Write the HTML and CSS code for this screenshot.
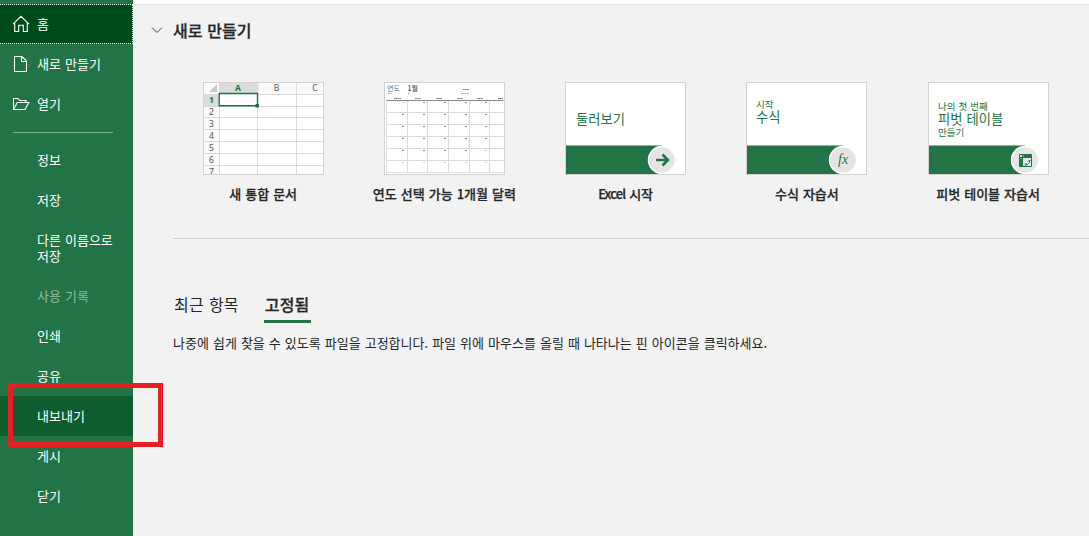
FILE: index.html
```html
<!DOCTYPE html>
<html lang="ko">
<head>
<meta charset="utf-8">
<title>Excel</title>
<link rel="stylesheet" href="styles.css">
</head>
<body>
<div class="app">
  <nav class="sidebar">
    <a class="item item-home"><svg class="icon" viewBox="0 0 18 18"><path d="M1 9.200 9 1.300l8 7.900M2.700 7.800v8.700h4V10.300h4.600v6.200h4V7.800"/></svg>홈</a>
    <a class="item"><svg class="icon" viewBox="0 0 18 18"><path d="M2.500 1.500h7.500l4.500 4.500v10.500h-12zM9.500 1.500v5h5"/></svg>새로 만들기</a>
    <a class="item"><svg class="icon" viewBox="0 0 18 18"><path d="M1.500 14.500v-11h4.500l1.500 2h6.500v2M1.500 14.500l3.800-7h11.500l-3.800 7z"/></svg>열기</a>
    <hr class="divider">
    <a class="item">정보</a>
    <a class="item">저장</a>
    <a class="item item-tall">다른 이름으로<br>저장</a>
    <a class="item item-disabled">사용 기록</a>
    <a class="item">인쇄</a>
    <a class="item">공유</a>
    <a class="item item-active">내보내기</a>
    <a class="item">게시</a>
    <a class="item">닫기</a>
  </nav>
  <main class="main">
    <h1 class="heading"><svg class="chevron" viewBox="0 0 12 8"><path d="M1 1.500 6 6.500l5-5"/></svg>새로 만들기</h1>
    <section class="templates">
      <figure class="card">
        <svg class="thumb" viewBox="0 0 119 91">
          <path class="head" d="M0 0h120v11H0zM0 11h15v81H0z" />
          <path class="head-on" d="M15.500 0h39v11h-39zM0 11h15v12.500H0z"/>
          <path class="corner" d="M5 9h8V1z"/>
          <path class="grid" d="M15.500 0v92M53.500 0v92M92.500 0v92M0 11.500h120M0 23.500h120M0 34.500h120M0 46.500h120M0 58.500h120M0 70.500h120M0 82.500h120"/>
          <path class="cell" d="M15.200 10.500h38.300v12.200h-38.300z"/>
          <path class="handle" d="M51.500 21H55v3.500h-3.500z"/>
          <g class="labels">
            <text class="on" x="34" y="8">A</text><text x="72.500" y="8">B</text><text x="111" y="8">C</text>
            <text class="on" x="7.500" y="20">1</text><text x="7.500" y="32.300">2</text><text x="7.500" y="44">3</text><text x="7.500" y="56">4</text><text x="7.500" y="68">5</text><text x="7.500" y="80">6</text><text x="7.500" y="92">7</text>
          </g>
        </svg>
        <figcaption>새 통합 문서</figcaption>
      </figure>
      <figure class="card">
        <svg class="thumb" viewBox="0 0 119 91">
          <text class="cal-year" x="2" y="7.500">연도</text><text class="cal-month" x="22.500" y="7.800">1월</text>
          <path class="cal-tick" d="M3 10.500h4M23 10.500h2M76 10.500h8"/>
          <path class="cal-note" d="M78 6.500h6"/>
          <path class="cal-days" d="M9 15.500h7M30 15.500h6M51 15.500h6M72 15.500h6M92 15.500h6M113 15.500h5"/>
          <path class="cal-rule" d="M1.500 17.500h117"/>
          <path class="grid" d="M1.500 18v72M22.500 18v72M42.500 18v72M63.500 18v72M84.500 18v72M104.500 18v72M1 29.500h118M1 41.500h118M1 53.500h118M1 65.500h118M1 77.500h118M1 89.500h118"/>
          <path class="cal-num" d="M38 19.500h2M59 19.500h2M80 19.500h2M100 19.500h2M17 31.500h2M38 31.500h2M59 31.500h2M80 31.500h2M100 31.500h2M17 43.500h2M38 43.500h2M59 43.500h2M80 43.500h2M100 43.500h2M17 55.500h2M38 55.500h2M59 55.500h2M80 55.500h2M100 55.500h2M17 67.500h2M38 67.500h2M59 67.500h2M80 67.500h2"/>
          <path class="cal-faint" d="M17 19.500h2M100 67.500h2M17 79.500h2M38 79.500h2M59 79.500h2M80 79.500h2M100 79.500h2"/>
        </svg>
        <figcaption>연도 선택 가능 1개월 달력</figcaption>
      </figure>
      <figure class="card">
        <svg class="thumb" viewBox="0 0 119 91">
          <text class="t-large" x="10" y="40.500">둘러보기</text>
          <path class="band" d="M0 62.500h96v29H0z"/><circle class="badge" cx="96" cy="77" r="13.500"/>
          <path class="arrow" d="M90 77h11M96.500 71.500l5.500 5.500-5.500 5.500"/>
        </svg>
        <figcaption><span class="latin">Excel</span> 시작</figcaption>
      </figure>
      <figure class="card">
        <svg class="thumb" viewBox="0 0 119 91">
          <text class="t-small" x="9" y="24.500">시작</text><text class="t-large" x="9" y="38.500">수식</text>
          <path class="band" d="M0 62.500h96v29H0z"/><circle class="badge" cx="96" cy="77" r="13.500"/>
          <text class="fx" x="91" y="81">fx</text>
        </svg>
        <figcaption>수식 자습서</figcaption>
      </figure>
      <figure class="card">
        <svg class="thumb" viewBox="0 0 119 91">
          <text class="t-small" x="9" y="27">나의 첫 번째</text><text class="t-large" x="9" y="41">피벗 테이블</text><text class="t-small" x="9" y="52.500">만들기</text>
          <path class="band" d="M0 62.500h96v29H0z"/><circle class="badge" cx="96" cy="77" r="13.500"/>
          <path class="pivot" d="M90.500 71.500h12v12h-12zM90.500 74.500h12M93.500 71.500v12"/>
          <path class="pivot-head" d="M94.500 71.500h8v2.500h-8zM90.500 75.500h2.500v8h-2.500z"/>
          <path class="pivot-arrow" d="M96.500 81.500h2l2-2v-2M97.500 80l-1.500 1.500 1.500 1.500M99 78.500l1.500-1.500 1.500 1.500"/>
        </svg>
        <figcaption>피벗 테이블 자습서</figcaption>
      </figure>
    </section>
    <div class="tabs"><span class="tab">최근 항목</span><span class="tab tab-on">고정됨</span></div>
    <p class="hint">나중에 쉽게 찾을 수 있도록 파일을 고정합니다. 파일 위에 마우스를 올릴 때 나타나는 핀 아이콘을 클릭하세요.</p>
  </main>
  <div class="callout"></div>
</div>
</body>
</html>
```
FILE: styles.css
```css
* { box-sizing: border-box; }
body {
  margin: 0;
  font: 13px/16px "Noto Sans CJK KR", sans-serif;
  word-spacing: .4px;
  color: #262626;
}
.app { position: relative; display: flex; width: 1089px; height: 536px; overflow: hidden; }
.sidebar { width: 133px; flex: none; padding-top: 4px; background: #227447; color: #fff; }
.item { display: flex; align-items: center; height: 40px; padding-left: 37px; }
.item-home { background: #004b1c; border: 1px dotted #fff; border-left: 0; }
.item-tall { height: 56px; }
.item-disabled { color: #90b9a2; }
.item-active { background: #0f5c2f; }
.icon { width: 18px; height: 18px; margin: 0 7px 0 -25px; flex: none; fill: none; stroke: #fff; stroke-width: 1.1; }
.divider { height: 1px; margin: 8px 20px 7px 13px; border: 0; background: #7fb296; }
.main { flex: 1; min-width: 0; padding-left: 40px; background: #f2f2f2; border-top: 4px solid #fff; box-shadow: inset 0 1px #e1e1e1; }
.heading { display: flex; align-items: center; height: 24px; margin: 14px 0 0 -22px; font-size: 16px; font-weight: 500; }
.heading { -webkit-text-stroke: .3px #262626; }
.chevron { width: 12px; height: 8px; margin-right: 10px; fill: none; stroke: #444; stroke-width: 1; }
.templates { display: grid; grid-template-columns: repeat(5, 181.25px); height: 197px; padding-top: 40px; border-bottom: 1px solid #d0d0d0; }
.card { display: flex; flex-direction: column; align-items: center; margin: 0 0 0 -1px; font-weight: 500; white-space: nowrap; -webkit-text-stroke: .25px #262626; }
.thumb { width: 121px; height: 93px; border: 1px solid #d2d2d2; background: #fff; margin-bottom: 11px; font-weight: 400; -webkit-text-stroke: 0; }
.latin { letter-spacing: -.9px; }
.head { fill: #fafafa; }
.head-on { fill: #dcdcdc; }
.corner { fill: #c9c9c9; }
.grid { fill: none; stroke: #dadada; }
.cell { fill: #fff; stroke: #227447; stroke-width: 1.4; }
.handle { fill: #227447; }
.labels { font: 8.5px "Noto Sans", sans-serif; text-anchor: middle; fill: #555; }
.on { font-weight: 700; fill: #227447; }
.cal-year { font-size: 7px; fill: #3a7c87; }
.cal-month { font-size: 7px; font-weight: 500; fill: #3d5059; }
.cal-tick { stroke: #a5a5a5; stroke-dasharray: 1.5 .5; }
.cal-note, .cal-days { stroke: #777; stroke-width: 1.2; stroke-dasharray: 1.5 .4; }
.cal-rule { stroke: #888; }
.cal-num { stroke: #8b8b8b; stroke-width: 1.2; }
.cal-faint { stroke: #d5d5d5; }
.t-large, .t-small { fill: #227447; font-family: "Liberation Sans", "Noto Sans CJK KR", sans-serif; font-size: 13.3px; }
.t-small { font-size: 9.5px; }
.band { fill: #227447; }
.badge { fill: #e4e4e4; stroke: #fff; stroke-width: 1.5; }
.arrow { fill: none; stroke: #227447; stroke-width: 2.5; }
.fx { font: italic 14px "Liberation Serif", serif; fill: #227447; }
.pivot { fill: none; stroke: #227447; }
.pivot-head { fill: #227447; }
.pivot-arrow { fill: none; stroke: #227447; stroke-width: .9; }
.tabs { display: flex; gap: 25px; margin-top: 53px; padding-left: 1px; font-size: 16px; line-height: 24px; }
.tab { height: 31px; letter-spacing: .2px; }
.tab-on { padding: 0 1px; font-weight: 500; -webkit-text-stroke: .3px #262626; border-bottom: 3px solid #227447; }
.hint { margin: 12px 0 0; white-space: nowrap; }
.callout { position: absolute; left: 8px; top: 383px; width: 155px; height: 64px; border: 5px solid #e81e25; }
```
